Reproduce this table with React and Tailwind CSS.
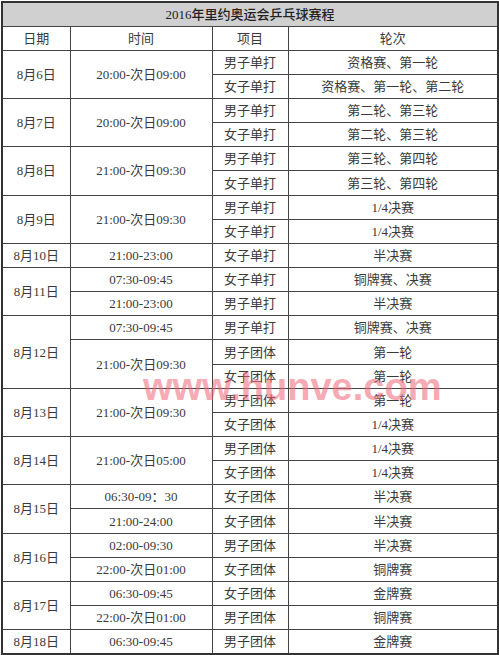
import React from "react";

const schedule = [
  { date: "8月6日", slots: [{ time: "20:00-次日09:00", rows: [["男子单打", "资格赛、第一轮"], ["女子单打", "资格赛、第一轮、第二轮"]] }] },
  { date: "8月7日", slots: [{ time: "20:00-次日09:00", rows: [["男子单打", "第二轮、第三轮"], ["女子单打", "第二轮、第三轮"]] }] },
  { date: "8月8日", slots: [{ time: "21:00-次日09:30", rows: [["男子单打", "第三轮、第四轮"], ["女子单打", "第三轮、第四轮"]] }] },
  { date: "8月9日", slots: [{ time: "21:00-次日09:30", rows: [["男子单打", "1/4决赛"], ["女子单打", "1/4决赛"]] }] },
  { date: "8月10日", slots: [{ time: "21:00-23:00", rows: [["女子单打", "半决赛"]] }] },
  {
    date: "8月11日",
    slots: [
      { time: "07:30-09:45", rows: [["女子单打", "铜牌赛、决赛"]] },
      { time: "21:00-23:00", rows: [["男子单打", "半决赛"]] },
    ],
  },
  {
    date: "8月12日",
    slots: [
      { time: "07:30-09:45", rows: [["男子单打", "铜牌赛、决赛"]] },
      { time: "21:00-次日09:30", rows: [["男子团体", "第一轮"], ["女子团体", "第一轮"]] },
    ],
  },
  { date: "8月13日", slots: [{ time: "21:00-次日09:30", rows: [["男子团体", "第一轮"], ["女子团体", "1/4决赛"]] }] },
  { date: "8月14日", slots: [{ time: "21:00-次日05:00", rows: [["男子团体", "1/4决赛"], ["女子团体", "1/4决赛"]] }] },
  {
    date: "8月15日",
    slots: [
      { time: "06:30-09：30", rows: [["女子团体", "半决赛"]] },
      { time: "21:00-24:00", rows: [["女子团体", "半决赛"]] },
    ],
  },
  {
    date: "8月16日",
    slots: [
      { time: "02:00-09:30", rows: [["男子团体", "半决赛"]] },
      { time: "22:00-次日01:00", rows: [["女子团体", "铜牌赛"]] },
    ],
  },
  {
    date: "8月17日",
    slots: [
      { time: "06:30-09:45", rows: [["女子团体", "金牌赛"]] },
      { time: "22:00-次日01:00", rows: [["男子团体", "铜牌赛"]] },
    ],
  },
  { date: "8月18日", slots: [{ time: "06:30-09:45", rows: [["男子团体", "金牌赛"]] }] },
];

const cell = "border border-[#444] text-center align-middle p-0";

export default function App() {
  // flatten into table rows with rowSpans
  const rows = [];
  schedule.forEach((day) => {
    const dayCount = day.slots.reduce((n, s) => n + s.rows.length, 0);
    day.slots.forEach((slot, si) => {
      slot.rows.forEach((r, ri) => {
        rows.push(
          <tr key={day.date + si + ri} className="h-[24.15px]">
            {si === 0 && ri === 0 && (
              <td rowSpan={dayCount} className={cell}>
                {day.date}
              </td>
            )}
            {ri === 0 && (
              <td rowSpan={slot.rows.length} className={cell}>
                {slot.time}
              </td>
            )}
            <td className={cell}>{r[0]}</td>
            <td className={cell}>{r[1]}</td>
          </tr>
        );
      });
    });
  });

  return (
    <div
      className="relative w-[499px] h-[655px] bg-white pl-[1px] pt-[1px] overflow-hidden text-[#3a3a3a] text-[13px] leading-none"
      style={{ fontFamily: '"Liberation Serif", "Noto Sans CJK SC", serif' }}
    >
      <table className="table-fixed border-collapse w-[496px] border-2 border-[#333]">
        <colgroup>
          <col className="w-[68px]" />
          <col className="w-[142px]" />
          <col className="w-[76px]" />
          <col className="w-[210px]" />
        </colgroup>
        <tbody>
          <tr className="h-[24.15px]">
            <td colSpan={4} className={cell + " bg-[#d0d0d0] text-[#222] font-medium"}>
              2016年里约奥运会乒乓球赛程
            </td>
          </tr>
          <tr className="h-[24.15px]">
            <td className={cell}>日期</td>
            <td className={cell}>时间</td>
            <td className={cell}>项目</td>
            <td className={cell}>轮次</td>
          </tr>
          {rows}
        </tbody>
      </table>

      {/* watermark */}
      <div
        className="absolute left-[143px] top-[368px] text-[38px] leading-none font-bold text-[#f06878] opacity-55 pointer-events-none"
        style={{ fontFamily: '"Liberation Sans", Arial, sans-serif' }}
      >
        www.hunve.com
      </div>
    </div>
  );
}
